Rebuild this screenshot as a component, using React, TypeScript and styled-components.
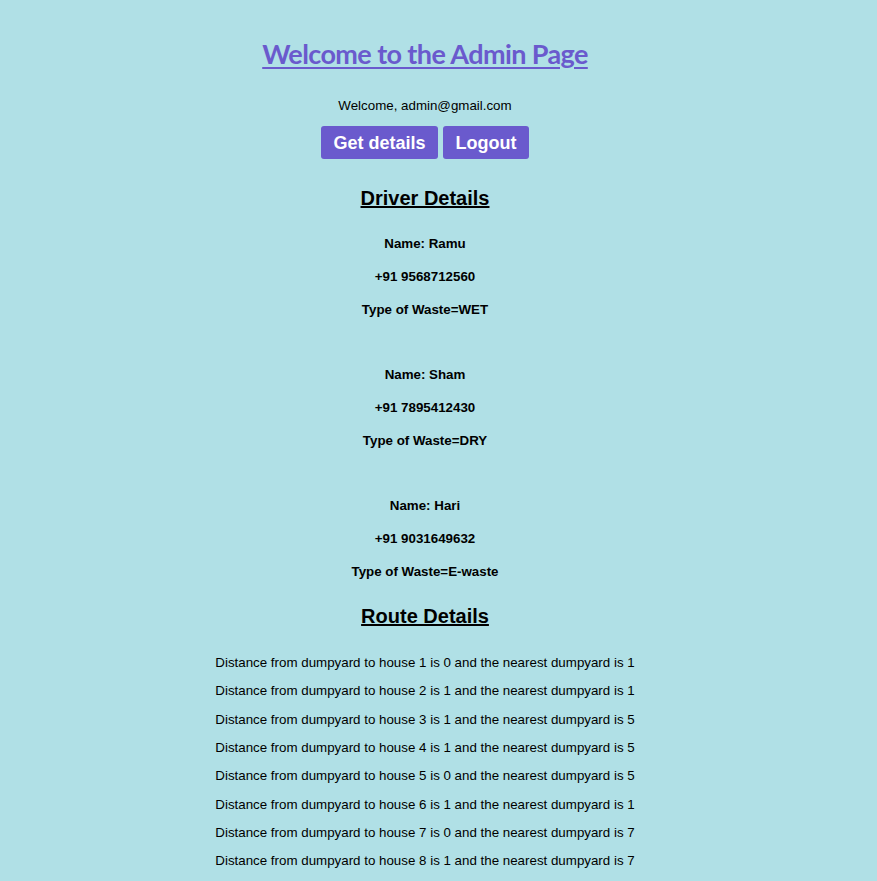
import React from "react";
import styled, { createGlobalStyle } from "styled-components";

const GlobalStyle = createGlobalStyle`
  html, body {
    margin: 0;
    padding: 0;
    background: #b0e0e6;
  }
  body {
    font-family: "Liberation Sans", Arial, sans-serif;
    color: #000;
  }
`;

const Page = styled.main`
  display: flex;
  flex-direction: column;
  align-items: center;
  padding: 36px 27px 0 0;
  text-align: center;
`;

const Title = styled.h1`
  margin: 0;
  font-family: Lato, "Open Sans", sans-serif;
  font-weight: 700;
  font-size: 27px;
  letter-spacing: -0.6px;
  line-height: 36px;
  color: #6a5acd;
  text-decoration: underline;
  text-decoration-thickness: 2px;
  text-underline-offset: 3px;
`;

const Greeting = styled.p`
  margin: 26px 0 0;
  font-size: 13.33px;
  line-height: 16px;
`;

const ButtonRow = styled.div`
  display: flex;
  gap: 5px;
  margin-top: 12px;
`;

const Button = styled.button<{ $w: number }>`
  width: ${(p) => p.$w}px;
  height: 33px;
  border: none;
  border-radius: 3px;
  background: #6a5acd;
  color: #fff;
  font-family: "Liberation Sans", Arial, sans-serif;
  font-weight: 700;
  font-size: 18px;
  padding: 2px 0 0;
  cursor: pointer;
`;

const SectionTitle = styled.h2<{ $top: number }>`
  margin: ${(p) => p.$top}px 0 0;
  font-size: 20px;
  line-height: 24px;
  font-weight: 700;
  text-decoration: underline;
`;

const DriverList = styled.div`
  display: flex;
  flex-direction: column;
  gap: 32px;
  margin-top: 16.5px;
`;

const DriverCard = styled.div`
  display: flex;
  flex-direction: column;
`;

const DriverLine = styled.p`
  margin: 0;
  font-size: 13.33px;
  font-weight: 700;
  line-height: 33px;
`;

const RouteList = styled.div`
  display: flex;
  flex-direction: column;
  margin-top: 21px;
`;

const RouteLine = styled.p`
  margin: 0;
  font-size: 13.33px;
  line-height: 28.35px;
`;

const drivers = [
  { name: "Ramu", phone: "+91 9568712560", type: "WET" },
  { name: "Sham", phone: "+91 7895412430", type: "DRY" },
  { name: "Hari", phone: "+91 9031649632", type: "E-waste" },
];

const routes = [
  [1, 0, 1],
  [2, 1, 1],
  [3, 1, 5],
  [4, 1, 5],
  [5, 0, 5],
  [6, 1, 1],
  [7, 0, 7],
  [8, 1, 7],
];

export default function App() {
  return (
    <>
      <GlobalStyle />
      <Page>
        <Title>Welcome to the Admin Page</Title>
        <Greeting>Welcome, admin@gmail.com</Greeting>
        <ButtonRow>
          <Button $w={117}>Get details</Button>
          <Button $w={86}>Logout</Button>
        </ButtonRow>
        <SectionTitle $top={27}>Driver Details</SectionTitle>
        <DriverList>
          {drivers.map((d) => (
            <DriverCard key={d.name}>
              <DriverLine>Name: {d.name}</DriverLine>
              <DriverLine>{d.phone}</DriverLine>
              <DriverLine>Type of Waste={d.type}</DriverLine>
            </DriverCard>
          ))}
        </DriverList>
        <SectionTitle $top={16.5}>Route Details</SectionTitle>
        <RouteList>
          {routes.map(([h, d, n]) => (
            <RouteLine key={h}>
              Distance from dumpyard to house {h} is {d} and the nearest dumpyard is {n}
            </RouteLine>
          ))}
        </RouteList>
      </Page>
    </>
  );
}
